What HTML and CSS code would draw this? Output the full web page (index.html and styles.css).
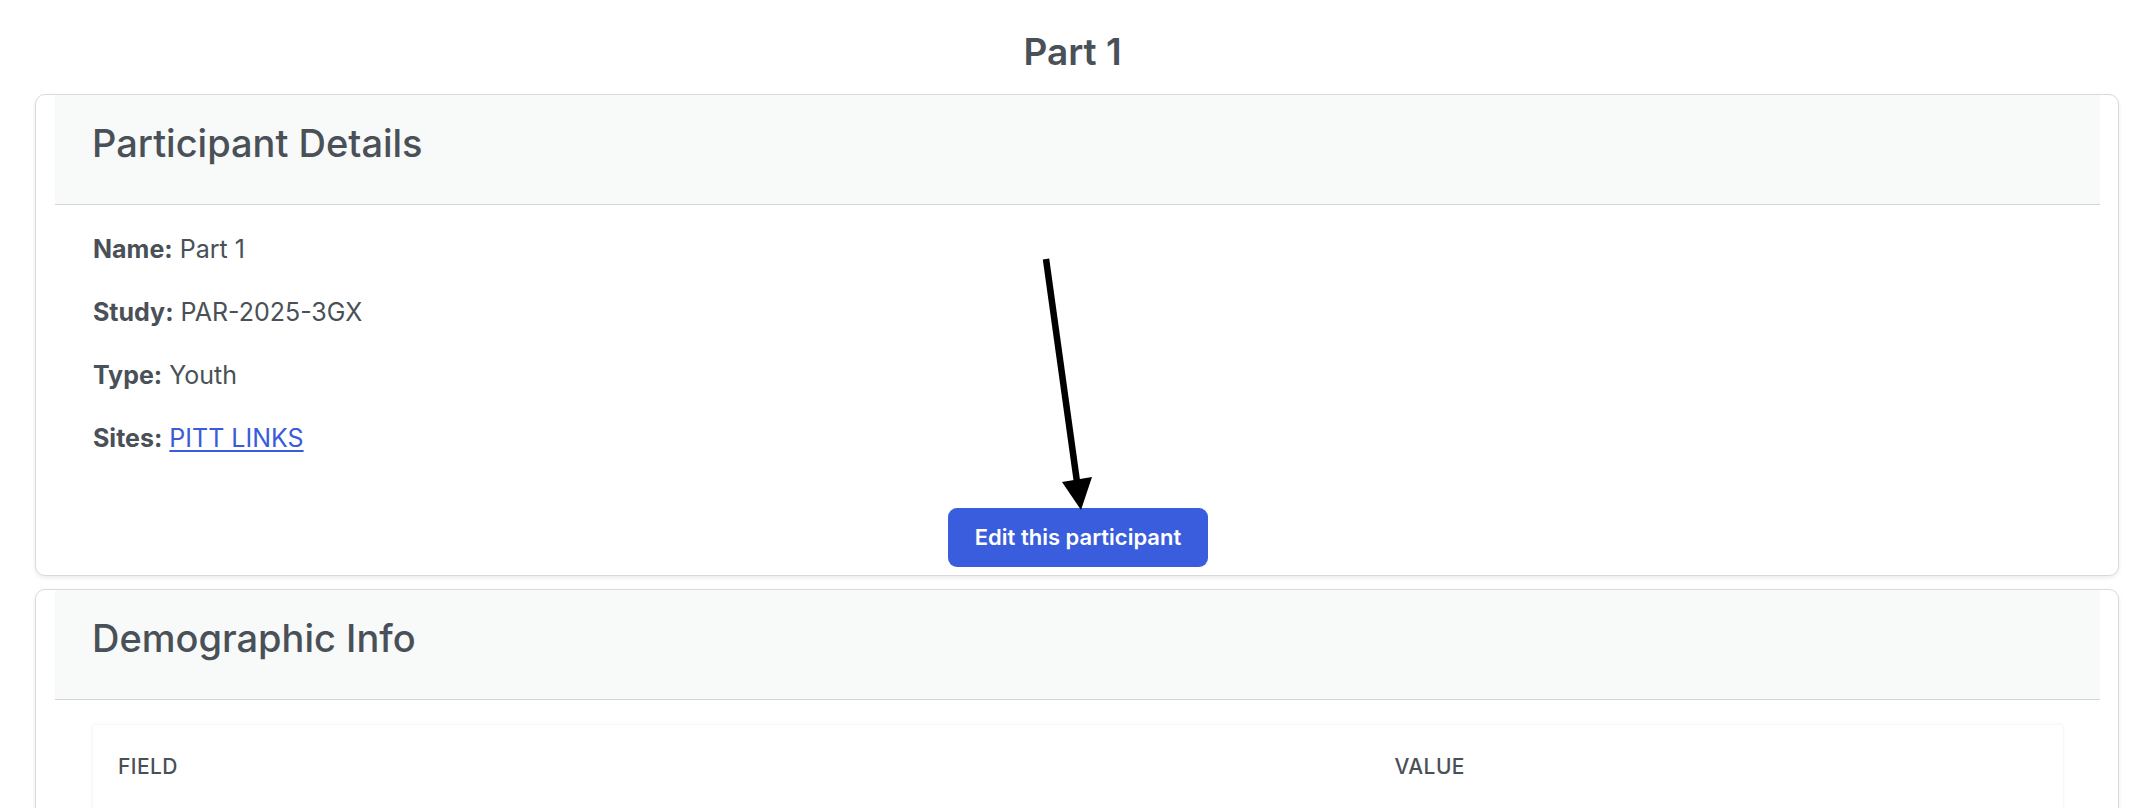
FILE: index.html
```html
<!DOCTYPE html>
<html lang="en">
<head>
<meta charset="utf-8">
<title>Part 1</title>
<link rel="stylesheet" href="styles.css">
</head>
<body>
<h1 class="page-title">Part 1</h1>
<main class="page">
  <section class="card">
    <div class="card-header"><h2 class="card-title">Participant Details</h2></div>
    <div class="card-body details">
      <p class="detail"><strong>Name:</strong> Part 1</p>
      <p class="detail"><strong>Study:</strong> PAR-2025-3GX</p>
      <p class="detail"><strong>Type:</strong> Youth</p>
      <p class="detail"><strong>Sites:</strong> <a class="link" href="#">PITT LINKS</a></p>
      <div class="actions"><button class="btn" type="button">Edit this participant</button></div>
    </div>
  </section>
  <section class="card">
    <div class="card-header"><h2 class="card-title">Demographic Info</h2></div>
    <div class="card-body table-body">
      <div class="table-wrap">
        <table class="data-table">
          <thead>
            <tr><th class="col-field">Field</th><th class="col-value">Value</th></tr>
          </thead>
        </table>
      </div>
    </div>
  </section>
</main>
<svg class="annotation" width="80" height="270" viewBox="0 0 80 270" aria-hidden="true">
  <line x1="16" y1="9" x2="47" y2="232" stroke="#000" stroke-width="6.5"/>
  <polygon points="32,232 62,227 51,260" fill="#000"/>
</svg>
</body>
</html>
```
FILE: styles.css
```css
* { box-sizing: border-box; }
html, body { margin: 0; padding: 0; background: #fff; }
body {
  font-family: Inter, "Noto Sans", sans-serif;
  color: #495057;
  overflow: hidden;
}
.page-title {
  margin: 30px 0 20px;
  font-size: 37px;
  line-height: 44px;
  font-weight: 600;
  text-align: center;
  color: #495057;
}
.page {
  margin: 0 26px 0 35px;
  display: flex;
  flex-direction: column;
  gap: 13px;
}
.card {
  border: 1px solid #dadada;
  border-radius: 10px;
  background: #fff;
  padding: 0 18px 0 19px;
  box-shadow: 0 2px 4px rgba(0,0,0,0.08);
}
.card-header {
  background: #f8f9f9;
  border-bottom: 1px solid #d4d4d4;
  padding: 24px 37px 37px;
}
.card-title {
  margin: 0;
  font-size: 38px;
  line-height: 48px;
  font-weight: 500;
  color: #495057;
}
.card-body { padding: 25px 37px 8px 38px; }
.details { display: flex; flex-direction: column; gap: 25px; }
.detail {
  margin: 0;
  font-size: 25px;
  line-height: 38px;
  color: #495057;
}
.detail strong { font-weight: 700; }
.link { color: #3b5bdb; text-decoration: underline; text-underline-offset: 3px; }
.actions { display: flex; justify-content: center; margin-top: 26px; }
.btn {
  font-family: Inter, "Noto Sans", sans-serif;
  font-size: 22px;
  line-height: 33px;
  font-weight: 600;
  color: #fff;
  background: #3a5ddd;
  border: 0;
  border-radius: 9px;
  padding: 13px 27px;
}
.table-body { padding-bottom: 40px; }
.table-wrap {
  background: #fff;
  box-shadow: 0 0 3px rgba(0,0,0,0.09);
}
.data-table { width: 100%; border-collapse: collapse; }
.data-table th {
  text-align: left;
  text-transform: uppercase;
  font-size: 21px;
  line-height: 32px;
  font-weight: 500;
  letter-spacing: 0.4px;
  color: #495057;
  padding: 26px 25px;
}
.col-field { width: 64.8%; }
.annotation {
  position: absolute;
  left: 1030px;
  top: 250px;
}
```
